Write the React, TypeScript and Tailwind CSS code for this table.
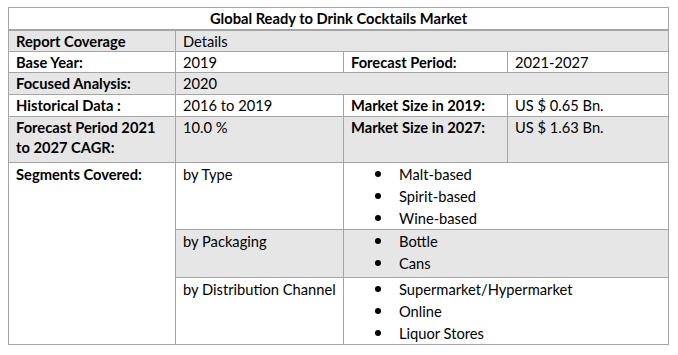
const gray = 'bg-[#e7e6e6]';
const cell = 'border border-[#a5a5a5] align-top px-[7px] py-0 leading-[20px]';
const seg = 'border border-[#a5a5a5] align-top px-[7px] py-0 leading-[22px]';

type Row = {
  label: string;
  value: string;
  label2?: string;
  value2?: string;
  shaded: boolean;
  h: string;
};

const rows: Row[] = [
  { label: 'Report Coverage', value: 'Details', shaded: true, h: 'h-[21px]' },
  { label: 'Base Year:', value: '2019', label2: 'Forecast Period:', value2: '2021-2027', shaded: false, h: 'h-[21px]' },
  { label: 'Focused Analysis:', value: '2020', shaded: true, h: 'h-[22px]' },
  { label: 'Historical Data :', value: '2016 to 2019', label2: 'Market Size in 2019:', value2: 'US $ 0.65 Bn.', shaded: false, h: 'h-[22px]' },
  { label: 'Forecast Period 2021 to 2027 CAGR:', value: '10.0 %', label2: 'Market Size in 2027:', value2: 'US $ 1.63 Bn.', shaded: true, h: 'h-[46px]' },
];

const segments = [
  { name: 'by Type', items: ['Malt-based', 'Spirit-based', 'Wine-based'], shaded: false, h: 'h-[66px]' },
  { name: 'by Packaging', items: ['Bottle', 'Cans'], shaded: true, h: 'h-[48px]' },
  { name: 'by Distribution Channel', items: ['Supermarket/Hypermarket', 'Online', 'Liquor Stores'], shaded: false, h: 'h-[66px]' },
];

function Bullets({ items }: { items: string[] }) {
  return (
    <ul>
      {items.map((item) => (
        <li key={item} className="flex items-center h-[22px]">
          <span className="ml-[24px] h-[6px] w-[6px] rounded-full bg-black" />
          <span className="ml-[18px]">{item}</span>
        </li>
      ))}
    </ul>
  );
}

export default function App() {
  return (
    <div className="min-h-screen w-[678px] bg-white pl-[8px] pt-[7px] text-[14.7px] text-black [font-family:Lato,'Open_Sans',sans-serif]">
      <table className="w-[660px] table-fixed border-collapse border border-[#a5a5a5]">
        <colgroup>
          <col className="w-[167px]" />
          <col className="w-[168px]" />
          <col className="w-[164px]" />
          <col className="w-[161px]" />
        </colgroup>
        <tbody>
          <tr className="h-[22px]">
            <td colSpan={4} className="border-b-2 border-[#a5a5a5] py-0 text-center align-middle font-bold leading-[20px]">
              Global Ready to Drink Cocktails Market
            </td>
          </tr>
          {rows.map((r) => (
            <tr key={r.label} className={`${r.h} ${r.shaded ? gray : 'bg-white'}`}>
              <td className={`${cell} font-bold`}>{r.label}</td>
              {r.label2 ? (
                <>
                  <td className={cell}>{r.value}</td>
                  <td className={`${cell} font-bold`}>{r.label2}</td>
                  <td className={cell}>{r.value2}</td>
                </>
              ) : (
                <td colSpan={3} className={cell}>
                  {r.value}
                </td>
              )}
            </tr>
          ))}
          {segments.map((s, i) => (
            <tr key={s.name} className={s.h}>
              {i === 0 && (
                <td rowSpan={3} className={`${seg} bg-white font-bold`}>
                  Segments Covered:
                </td>
              )}
              <td className={`${seg} ${s.shaded ? gray : 'bg-white'}`}>{s.name}</td>
              <td colSpan={2} className={`${seg} ${s.shaded ? gray : 'bg-white'}`}>
                <Bullets items={s.items} />
              </td>
            </tr>
          ))}
        </tbody>
      </table>
    </div>
  );
}
